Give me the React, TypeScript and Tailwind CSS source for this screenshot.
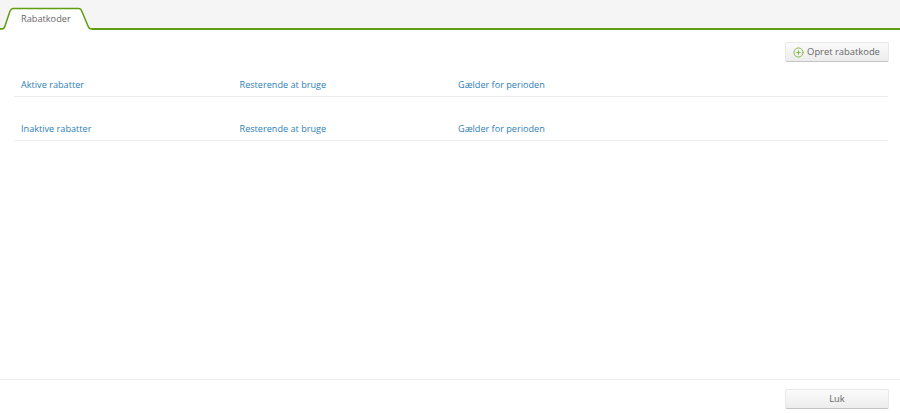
import { CirclePlus } from 'lucide-react';

const font = "font-['Open_Sans',sans-serif]";

function DiscountHeader({ title }: { title: string }) {
  return (
    <div className="ml-[14px] mr-3 flex h-[30px] items-center border-b border-[#ececec] pl-[7px] pt-[7px] text-[9.15px] text-[#2f80b6]">
      <div className="w-[218.5px]">{title}</div>
      <div className="w-[218.5px]">Resterende at bruge</div>
      <div>Gælder for perioden</div>
    </div>
  );
}

export default function App() {
  return (
    <div className={`${font} flex h-[413px] w-[900px] flex-col bg-white`}>
      <div className="relative h-[30px] shrink-0 border-b-2 border-[#5f9e0f] bg-[#f5f5f5]">
        <svg className="absolute left-0 top-0" width="92" height="30" viewBox="0 0 92 30">
          <path d="M0 29 H2 C4 29 4.5 27.5 5 26 L10 11 C11 9 11.5 8.5 13 8.5 H79 C80.5 8.5 81 9 81.7 11 L88 26 C88.6 27.5 89 29 91 29 H92 V30 H0 Z" fill="#fff" />
          <path d="M0 29 H2 C4 29 4.5 27.5 5 26 L10 11 C11 9 11.5 8.5 13 8.5 H79 C80.5 8.5 81 9 81.7 11 L88 26 C88.6 27.5 89 29 91 29 H92" fill="none" stroke="#5f9e0f" strokeWidth="1.5" />
        </svg>
        <span className="absolute left-[21px] top-[11px] text-[9.2px] leading-[15px] text-[#666]">Rabatkoder</span>
      </div>

      <div className="flex-1">
        <div className="mr-[11px] mt-[12px] flex justify-end">
          <button className="flex h-[20px] w-[104px] items-center justify-center gap-[3px] rounded-[2px] border border-[#e8e8e8] border-b-[#c4c4c4] bg-gradient-to-b from-[#fbfbfb] to-[#ececec] pr-[1px] text-[9.4px] text-[#666]">
            <CirclePlus className="h-[11px] w-[11px] text-[#7fb23c]" strokeWidth={2} />
            Opret rabatkode
          </button>
        </div>
        <div className="mt-[5px]">
          <DiscountHeader title="Aktive rabatter" />
        </div>
        <div className="mt-[14px]">
          <DiscountHeader title="Inaktive rabatter" />
        </div>
      </div>

      <div className="flex h-[34px] shrink-0 items-start justify-end border-t border-[#ececec] pr-[11px] pt-[9px]">
        <button className="h-[20px] w-[104px] rounded-[2px] border border-[#e8e8e8] border-b-[#c4c4c4] bg-gradient-to-b from-[#fbfbfb] to-[#ececec] text-[9.4px] text-[#666]">
          Luk
        </button>
      </div>
    </div>
  );
}
